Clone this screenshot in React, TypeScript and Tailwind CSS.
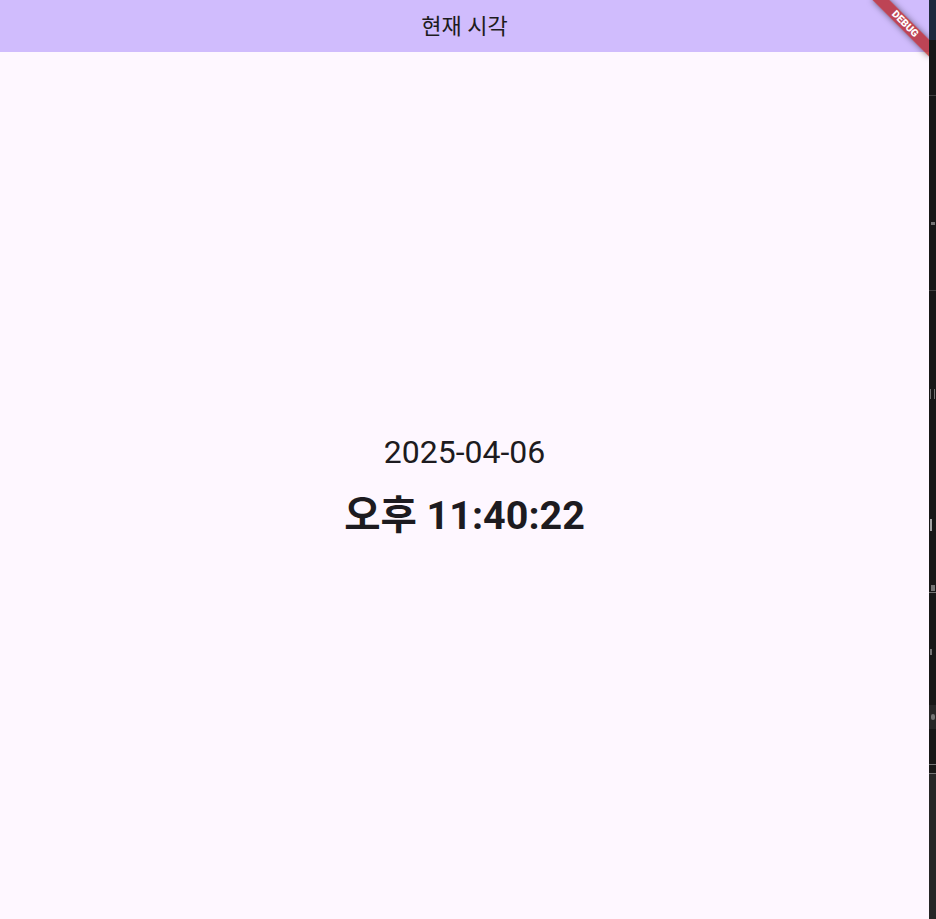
const SideStrip = () => (
  <div className="flex h-[919px] w-[7px] shrink-0 flex-col bg-neutral-900">
    <div className="h-[40px] shrink-0 bg-slate-800" />
    <div className="h-[55px] shrink-0" />
    <div className="h-px shrink-0 bg-neutral-700" />
    <div className="h-[126px] shrink-0" />
    <div className="ml-[2px] h-[3px] w-[4px] shrink-0 bg-neutral-500" />
    <div className="h-[65px] shrink-0" />
    <div className="h-px shrink-0 bg-neutral-700" />
    <div className="h-[98px] shrink-0" />
    <div className="ml-[1px] h-[10px] w-[5px] shrink-0 border-x border-neutral-500" />
    <div className="h-[120px] shrink-0" />
    <div className="ml-[1px] h-[12px] w-[2px] shrink-0 bg-neutral-400" />
    <div className="h-[54px] shrink-0" />
    <div className="ml-[2px] h-[6px] w-[4px] shrink-0 bg-neutral-500" />
    <div className="mt-px h-px shrink-0 bg-neutral-500" />
    <div className="h-[56px] shrink-0" />
    <div className="ml-[1px] h-[6px] w-[2px] shrink-0 bg-neutral-500" />
    <div className="h-[50px] shrink-0" />
    <div className="flex h-[24px] shrink-0 items-center bg-neutral-800 pl-[2px]">
      <div className="h-[6px] w-[4px] rounded-sm bg-neutral-500" />
    </div>
    <div className="h-[35px] shrink-0" />
    <div className="h-px shrink-0 bg-neutral-500" />
    <div className="h-[8px] shrink-0" />
    <div className="h-px shrink-0 bg-neutral-500" />
    <div className="flex-1 bg-neutral-800" />
  </div>
)

const DebugBanner = () => (
  <div className="pointer-events-none absolute right-[-16px] top-[18px] flex h-[12px] w-[80px] rotate-45 items-center justify-center bg-[#b71c1c]/75 shadow-[0_0_6px_rgba(0,0,0,0.5)]">
    <span className="font-['Roboto','Liberation_Sans',sans-serif] text-[10.2px] font-black leading-none text-white">
      DEBUG
    </span>
  </div>
)

export default function App() {
  return (
    <div className="flex h-[919px] w-[936px] overflow-hidden bg-neutral-900">
      <div className="relative flex h-full w-[929px] shrink-0 flex-col overflow-hidden bg-[#fef7ff]">
        {/* App bar */}
        <header className="flex h-[52px] shrink-0 items-center justify-center bg-[#d0bcfd]">
          <h1 className="font-['Roboto','Noto_Sans_CJK_KR',sans-serif] text-[22px] font-normal text-[#1d1b20]">
            현재 시각
          </h1>
        </header>

        {/* Clock */}
        <main className="flex flex-1 flex-col items-center justify-center pt-px text-[#1d1b20]">
          <p className="font-['Roboto','Noto_Sans_CJK_KR',sans-serif] text-[32px] leading-[38px]">
            2025-04-06
          </p>
          <p className="mt-[22px] font-['Roboto','Noto_Sans_CJK_KR',sans-serif] text-[39.5px] font-bold leading-[46px]">
            오후 11:40:22
          </p>
        </main>

        <DebugBanner />
      </div>
      <SideStrip />
    </div>
  )
}
